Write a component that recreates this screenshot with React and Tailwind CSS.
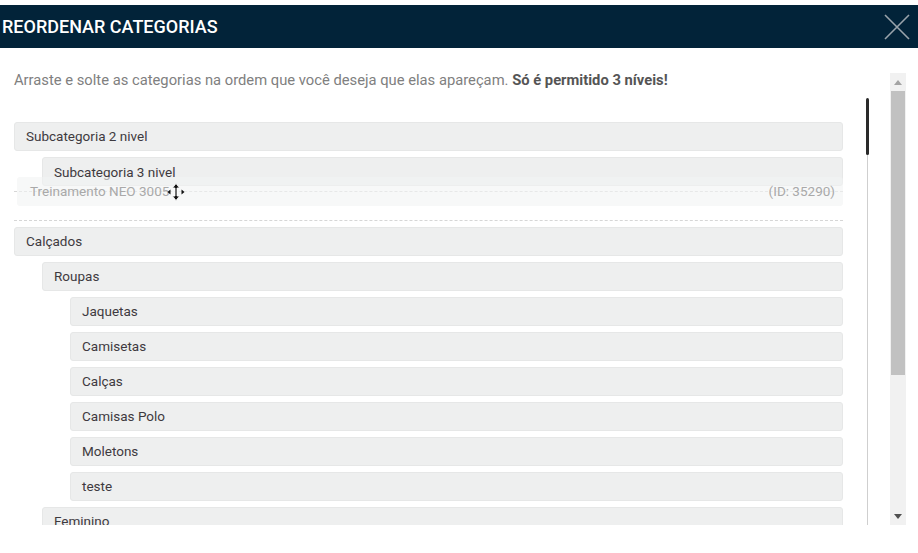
import { useState } from 'react'

const rows = [
  { label: 'Calçados', level: 0 },
  { label: 'Roupas', level: 1 },
  { label: 'Jaquetas', level: 2 },
  { label: 'Camisetas', level: 2 },
  { label: 'Calças', level: 2 },
  { label: 'Camisas Polo', level: 2 },
  { label: 'Moletons', level: 2 },
  { label: 'teste', level: 2 },
  { label: 'Feminino', level: 1 },
]

const indent = ['ml-0', 'ml-[28px]', 'ml-[56px]']

function Row({ label, level, className = '' }) {
  return (
    <div
      className={`${indent[level]} h-[29px] shrink-0 flex items-center pl-[11px] rounded-[3px] bg-[#eeefef] border border-[#e6e7e7] text-[13.5px] text-[#3e3a40] ${className}`}
    >
      {label}
    </div>
  )
}

function MoveCursor() {
  return (
    <svg width="20" height="20" viewBox="0 0 20 20" className="absolute left-full -ml-[3px] top-[1px]">
      <path d="M10 1.5 L13.5 6 H11 V14 H13.5 L10 18.5 L6.5 14 H9 V6 H6.5 Z" fill="#111" stroke="#fff" strokeWidth="0.8" />
      <path d="M1.5 10 L4.5 7.5 V12.5 Z" fill="#111" />
      <path d="M18.5 10 L15.5 7.5 V12.5 Z" fill="#111" />
    </svg>
  )
}

export default function App() {
  const [dragging] = useState(true)

  return (
    <div className="w-[918px] h-[553px] bg-white overflow-hidden pt-[5px]" style={{ fontFamily: 'Roboto, "Liberation Sans", sans-serif' }}>
      <div className="h-[43px] bg-[#022339] flex items-center justify-between pl-[2px] pr-[8px]">
        <h1 className="text-white text-[18px] font-medium">REORDENAR CATEGORIAS</h1>
        <svg width="26" height="26" viewBox="0 0 26 26">
          <path d="M1 1 L25 25 M25 1 L1 25" stroke="#9aa3ab" strokeWidth="1.6" />
        </svg>
      </div>

      <div className="flex h-[505px]">
        <div className="w-[876px] flex flex-col">
          <p className="pl-[14px] pt-[22px] h-[50px] text-[14.75px] leading-[20px] text-[#808080] whitespace-nowrap">
            Arraste e solte as categorias na ordem que você deseja que elas apareçam.{' '}
            <span className="font-bold text-[#555]">Só é permitido 3 níveis!</span>
          </p>

          <div className="flex h-[427px]">
            <div className="w-[843px] pl-[14px] pt-[24px] overflow-hidden">
              <div className="flex flex-col gap-[6px]">
                <Row label="Subcategoria 2 nivel" level={0} />
                <div className="relative flex flex-col">
                  <Row label="Subcategoria 3 nivel" level={1} className="items-start pt-[4px]" />
                  <div className="h-[30px] mt-[5px] border-y border-dashed border-[#d6d6d6]" />
                  {dragging && (
                    <div className="absolute left-[3px] right-0 top-[20px] h-[29px] flex items-center justify-between pl-[13px] pr-[8px] rounded-[3px] bg-[#f1f4f4]/60 text-[13.5px] text-[#a9a9a9]">
                      <span className="relative">
                        Treinamento NEO 3005
                        <MoveCursor />
                      </span>
                      <span>(ID: 35290)</span>
                    </div>
                  )}
                </div>
                {rows.map((r) => (
                  <Row key={r.label} {...r} />
                ))}
              </div>
            </div>

            <div className="w-[33px] flex justify-center pl-[15px]">
              <div className="relative w-[1px] h-full bg-[#cfcfcf]">
                <div className="absolute -left-[1px] top-0 w-[3px] h-[57px] rounded-full bg-[#2a2a2a]" />
              </div>
            </div>
          </div>
        </div>

        <div className="ml-[14px] mt-[25px] w-[16px] h-[452px] bg-[#f1f1f1] flex flex-col items-center">
          <div className="h-[18px] flex items-center justify-center">
            <svg width="8" height="5" viewBox="0 0 8 5"><path d="M0 5 L4 0 L8 5 Z" fill="#a3a3a3" /></svg>
          </div>
          <div className="w-[14px] h-[284px] bg-[#c1c1c1]" />
          <div className="flex-1" />
          <div className="h-[18px] flex items-center justify-center">
            <svg width="8" height="5" viewBox="0 0 8 5"><path d="M0 0 L8 0 L4 5 Z" fill="#505050" /></svg>
          </div>
        </div>
      </div>
    </div>
  )
}
